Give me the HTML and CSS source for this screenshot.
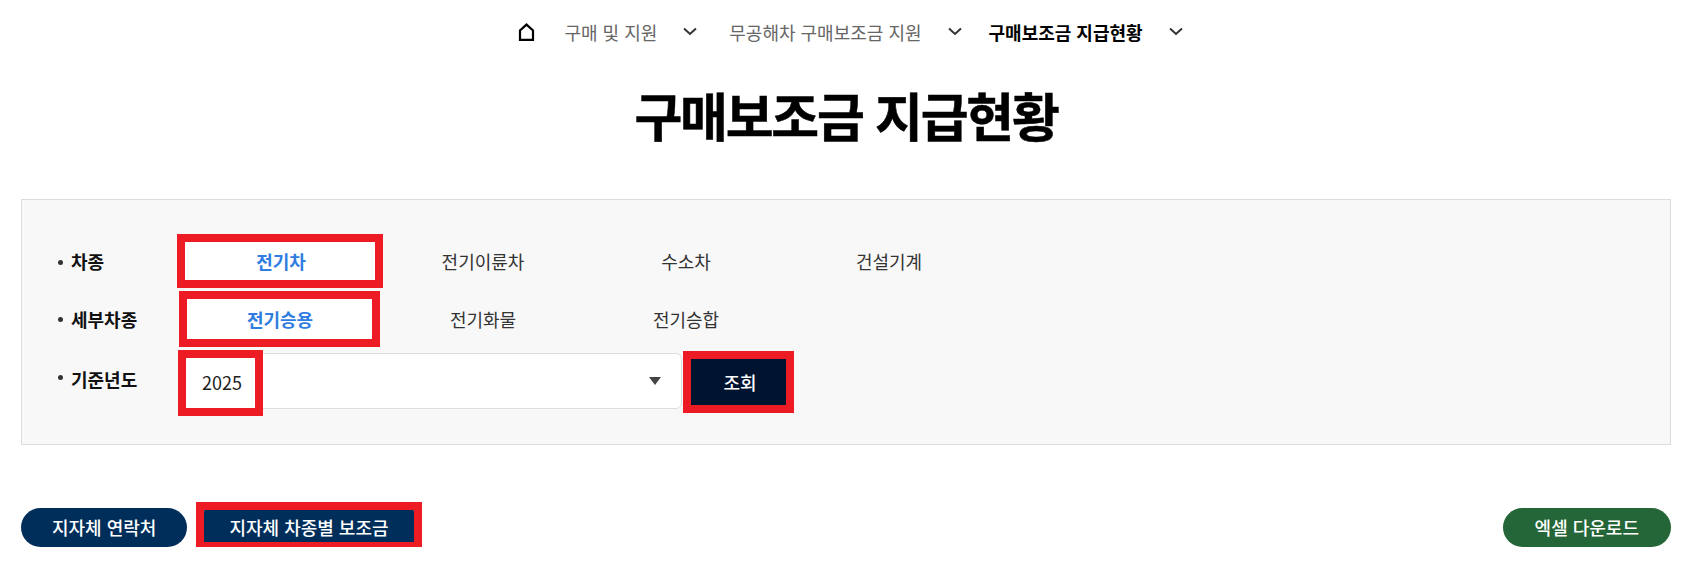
FILE: index.html
```html
<!DOCTYPE html>
<html lang="ko">
<head>
  <meta charset="UTF-8" />
  <title>구매보조금 지급현황</title>
  <link rel="stylesheet" href="styles.css">
</head>
<body>
  <nav class="crumbs">
    <svg class="home" viewBox="0 0 17 18" width="17" height="18">
      <path d="M2 16.8 V7.5 L8.5 1.6 L15 7.5 V16.8 Z" fill="none" stroke="#000" stroke-width="2.2"/>
    </svg>
    <a class="crumb">구매 및 지원</a>
    <svg class="chev" viewBox="0 0 14 9" width="14" height="9"><path d="M1 1.5 L7 7 L13 1.5" fill="none" stroke="#333" stroke-width="2"/></svg>
    <a class="crumb">무공해차 구매보조금 지원</a>
    <svg class="chev tight" viewBox="0 0 14 9" width="14" height="9"><path d="M1 1.5 L7 7 L13 1.5" fill="none" stroke="#333" stroke-width="2"/></svg>
    <a class="crumb current">구매보조금 지급현황</a>
    <svg class="chev last" viewBox="0 0 14 9" width="14" height="9"><path d="M1 1.5 L7 7 L13 1.5" fill="none" stroke="#333" stroke-width="2"/></svg>
  </nav>

  <h1 class="title">구매보조금 지급현황</h1>

  <section class="search">
    <div class="row">
      <span class="label">차종</span>
      <div class="tabs">
        <a class="tab active mark-car">전기차</a>
        <a class="tab">전기이륜차</a>
        <a class="tab">수소차</a>
        <a class="tab">건설기계</a>
      </div>
    </div>
    <div class="row sub-row">
      <span class="label">세부차종</span>
      <div class="tabs">
        <a class="tab active mark-sub">전기승용</a>
        <a class="tab">전기화물</a>
        <a class="tab">전기승합</a>
      </div>
    </div>
    <div class="row year-row">
      <span class="label">기준년도</span>
      <div class="year">
        <div class="select">
          <span class="year-value">2025</span>
          <span class="arrow"></span>
        </div>
        <button class="search-btn">조회</button>
      </div>
    </div>
  </section>

  <div class="actions">
    <a class="pill navy">지자체 연락처</a>
    <a class="pill navy square">지자체 차종별 보조금</a>
    <a class="pill green">엑셀 다운로드</a>
  </div>
</body>
</html>
```

FILE: styles.css
```css
*, *::before, *::after { box-sizing: border-box; }
body {
  margin: 0;
  font-family: "Noto Sans CJK KR", "Noto Sans", sans-serif;
  color: #222;
  background: #fff;
}

/* 상단 경로 */
.crumbs {
  display: flex;
  align-items: center;
  justify-content: center;
  height: 63px;
  padding-left: 17px;
  font-size: 18px;
}
.home { margin-right: 29px; }
.crumb { color: #666; }
.crumb.current { color: #000; font-weight: 700; }
.chev { margin: 0 32px 0 26px; }
.chev.tight { margin-right: 27px; }
.chev.last { margin-right: 0; }

.title {
  margin: 17px 0 0;
  height: 119px;
  padding-left: 8px;
  text-align: center;
  font-size: 52px;
  line-height: 69px;
  font-weight: 700;
  -webkit-text-stroke: 0.5px #000;
  color: #000;
  letter-spacing: -2.2px;
}

/* 검색 영역 */
.search {
  margin: 0 13px 0 21px;
  height: 246px;
  padding: 37px 0 0 36px;
  border: 1px solid #ddd;
  background: #f8f8f8;
}
.row { display: flex; height: 57px; }
.label {
  position: relative;
  width: 122px;
  padding-left: 13px;
  font-size: 18px;
  line-height: 49px;
  font-weight: 700;
  color: #111;
}
.label::before {
  content: "";
  position: absolute;
  left: 0;
  top: 23px;
  width: 5px;
  height: 5px;
  border-radius: 50%;
  background: #333;
}
.sub-row .label { line-height: 51px; }
.year-row .label { line-height: 57px; }
.year-row .label::before { top: 24px; }
.tabs { display: flex; gap: 3px; }
.tab {
  position: relative;
  width: 200px;
  height: 51px;
  text-align: center;
  font-size: 18px;
  line-height: 49px;
  color: #333;
}
.sub-row .tab { line-height: 51px; }
.tab.active {
  border: 1px solid #2f7de1;
  background: #fff;
  color: #2f7de1;
  font-weight: 700;
  line-height: 47px;
}
.sub-row .tab.active { line-height: 49px; }

/* 빨간 표시 */
.mark-car::after,
.mark-sub::after,
.year-value::after,
.search-btn::after,
.square::after {
  content: "";
  position: absolute;
  border: 8px solid #ed1c24;
}
.mark-car { padding-left: 2px; }
.mark-car::after { left: -4px; right: -4px; top: -4px; bottom: -1px; }
.mark-sub::after { left: -2px; right: -1px; top: -4px; bottom: -3px; }

.year { display: flex; align-items: flex-start; }
.select {
  position: relative;
  width: 502px;
  height: 56px;
  margin-top: 2px;
  border: 1px solid #ddd;
  border-radius: 6px;
  background: #fff;
}
.year-value {
  position: absolute;
  left: 21px;
  top: 0;
  font-size: 18px;
  line-height: 56px;
}
.year-value::after { left: -24px; top: -4px; width: 85px; height: 66px; }
.arrow {
  position: absolute;
  right: 20px;
  top: 23px;
  border-left: 6px solid transparent;
  border-right: 6px solid transparent;
  border-top: 8px solid #444;
}
.search-btn {
  position: relative;
  width: 95px;
  height: 46px;
  margin: 8px 0 0 9px;
  padding-left: 9px;
  border: 0;
  background: #00142f;
  color: #fff;
  font: 500 18px "Noto Sans CJK KR", sans-serif;
}
.search-btn::after { left: -8px; right: -8px; top: -8px; bottom: -8px; }

/* 하단 버튼 */
.actions {
  display: flex;
  gap: 17px;
  margin: 63px 13px 0 21px;
}
.pill {
  position: relative;
  height: 39px;
  padding: 0 31px;
  border-radius: 20px;
  font-size: 18px;
  line-height: 38px;
  font-weight: 500;
  color: #fff;
}
.navy { background: #002e5b; }
.green { margin-left: auto; padding: 0 32px; background: #246637; }
.square { padding: 0 25px; border-radius: 4px; }
.square::after { left: -8px; right: -8px; top: -6px; bottom: -3px; }
```
